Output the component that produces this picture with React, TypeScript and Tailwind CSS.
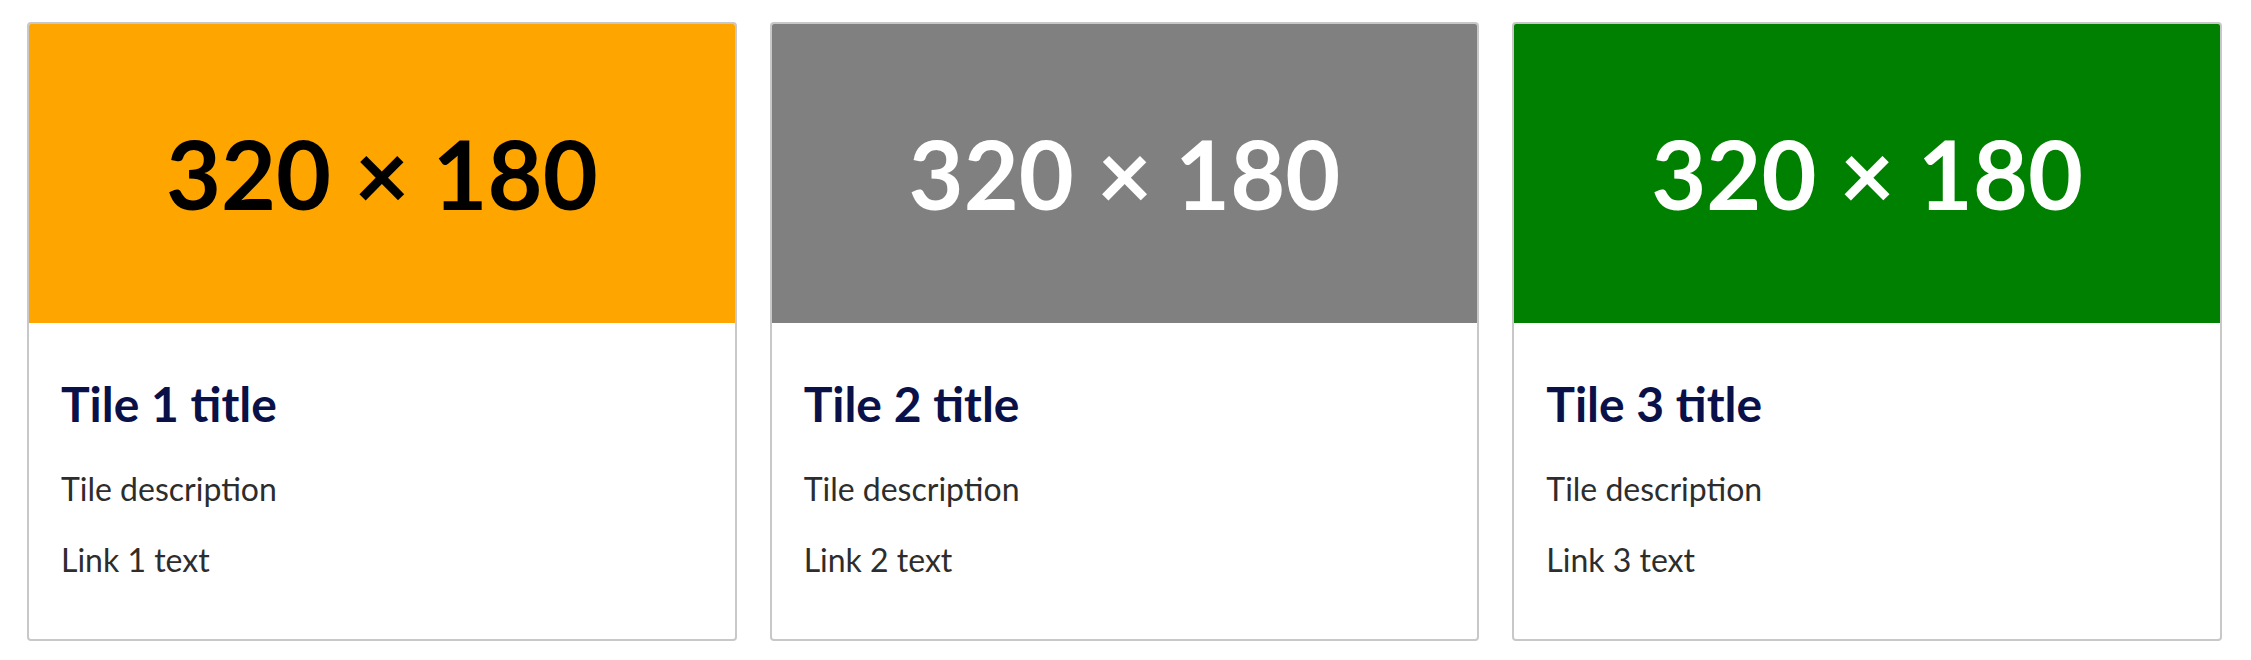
interface Tile {
  id: number;
  bg: string;
  fg: string;
}

const tiles: Tile[] = [
  { id: 1, bg: "bg-[#ffa500]", fg: "text-black" },
  { id: 2, bg: "bg-[#808080]", fg: "text-white" },
  { id: 3, bg: "bg-[#008000]", fg: "text-white" },
];

function TileCard({ tile }: { tile: Tile }) {
  return (
    <div className="flex flex-col overflow-hidden rounded-[4px] border-2 border-[#c8c8c8] bg-white">
      <div
        className={`flex h-[299px] items-center justify-center ${tile.bg} ${tile.fg}`}
      >
        <span className="text-[95px] font-bold leading-none">320 × 180</span>
      </div>
      <div className="px-[32px] pt-[52px] pb-[60px]">
        <h2 className="text-[48px] font-bold leading-[1.2] text-[#0a1149]">
          Tile {tile.id} title
        </h2>
        <p className="mt-[37px] text-[32px] leading-[1.2] text-[#2d2d2d]">
          Tile description
        </p>
        <p className="mt-[33px] text-[32px] leading-[1.2] text-[#2d2d2d]">
          Link {tile.id} text
        </p>
      </div>
    </div>
  );
}

export default function App() {
  return (
    <div className="min-h-[660px] bg-white pt-[22px] pl-[27px] pr-[29px] font-['Lato',sans-serif]">
      <div className="grid grid-cols-3 gap-[33px]">
        {tiles.map((tile) => (
          <TileCard key={tile.id} tile={tile} />
        ))}
      </div>
    </div>
  );
}
